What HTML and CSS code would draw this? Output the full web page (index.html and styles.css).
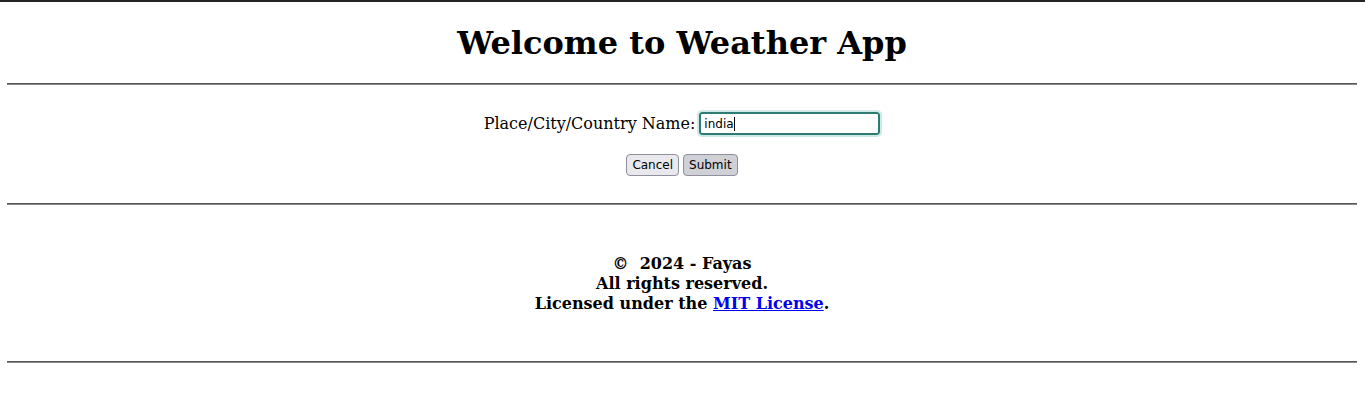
FILE: index.html
```html
<!DOCTYPE html>
<html lang="en">
<head>
<meta charset="utf-8">
<title>Weather App</title>
<link rel="stylesheet" href="styles.css">
</head>
<body>
<div class="topline"></div>
<main class="page">
  <header class="header">
    <h1 class="title">Welcome to Weather App</h1>
  </header>
  <hr class="rule">
  <form class="search">
    <div class="field">
      <label class="label" for="place">Place/City/Country Name:</label>
      <span class="input-wrap"><input class="input" id="place" type="text" value="india"><span class="caret"></span></span>
    </div>
    <div class="actions">
      <button class="btn" type="button">Cancel</button>
      <button class="btn btn-hover" type="button">Submit</button>
    </div>
  </form>
  <hr class="rule">
  <footer class="footer">
    <p class="footer-text">&copy;&nbsp; 2024 - Fayas<br>All rights reserved.<br>Licensed under the <a class="link" href="#">MIT License</a>.</p>
  </footer>
  <hr class="rule">
</main>
</body>
</html>
```
FILE: styles.css
```css
html, body {
  margin: 0;
  padding: 0;
  background: #ffffff;
}
body {
  font-family: "DejaVu Serif", serif;
  font-size: 16px;
  color: #000;
}
.topline {
  height: 2px;
  background: #262626;
}
.page {
  padding: 0 8px 0 7px;
}
.header {
  padding-top: 23px;
}
.title {
  margin: 0 0 21px;
  font-size: 32px;
  font-weight: bold;
  text-align: center;
  line-height: 37px;
}
.rule {
  margin: 0;
  border: 0;
  height: 0;
  border-top: 1px solid #555555;
  border-bottom: 1px solid #8a8a8a;
}
.search {
  padding: 27px 0 27px;
  display: flex;
  flex-direction: column;
  align-items: center;
  gap: 19px;
}
.field {
  display: flex;
  align-items: center;
  gap: 4px;
}
.label {
  font-size: 16px;
  line-height: 20px;
}
.input-wrap {
  position: relative;
  display: inline-flex;
}
.input {
  box-sizing: border-box;
  width: 181px;
  height: 23px;
  padding: 1px 3px;
  border: 2px solid #2e7b73;
  border-radius: 3px;
  outline: 2px solid #cfe9e6;
  outline-offset: 0;
  font-family: "DejaVu Sans", sans-serif;
  font-size: 12px;
  color: #000;
  background: #fff;
}
.caret {
  position: absolute;
  left: 35px;
  top: 5px;
  width: 1px;
  height: 14px;
  background: #000;
}
.actions {
  display: flex;
  gap: 4px;
}
.btn {
  box-sizing: border-box;
  height: 22px;
  padding: 0 5px;
  border: 1px solid #8f8f9d;
  border-radius: 4px;
  background: #e9e9ed;
  font-family: "DejaVu Sans", sans-serif;
  font-size: 12px;
  color: #000;
}
.btn-hover {
  background: #d0d0d7;
}
.footer {
  padding: 49px 0 47px;
}
.footer-text {
  margin: 0;
  text-align: center;
  font-weight: bold;
  line-height: 20px;
}
.link {
  color: #0000ee;
  text-decoration: underline;
}
```
